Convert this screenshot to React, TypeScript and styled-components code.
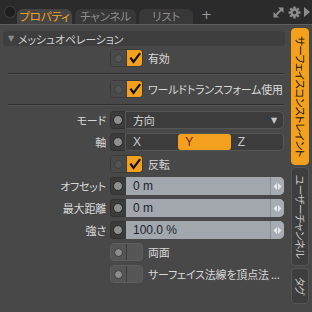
import React from 'react';
import styled, { createGlobalStyle } from 'styled-components';

const Global = createGlobalStyle`
  html, body { margin: 0; padding: 0; background: #484848; }
  body { font-family: "Noto Sans CJK JP", "Noto Sans", sans-serif; }
`;

const Frame = styled.div`
  width: 312px;
  height: 312px;
  display: flex;
  flex-direction: column;
  background: #484848;
  overflow: hidden;
  font-family: "Noto Sans CJK JP", "Noto Sans", sans-serif;
  font-feature-settings: "palt";
  color: #d8d8d8;
  font-size: 11px;
  letter-spacing: -0.2px;
`;

const TopBar = styled.div`
  height: 25px;
  flex: none;
  box-sizing: border-box;
  background: #2b2b2b;
  border-bottom: 1px solid #5e5e5e;
  display: flex;
  align-items: flex-end;
  padding-left: 5px;
`;

const Knob = styled.div`
  width: 10px;
  height: 10px;
  border-radius: 50%;
  background: #1e1e1e;
  box-shadow: 0 0 0 1px #3a3a3a;
  align-self: center;
  margin-right: 2px;
`;

const Tab = styled.div<{ $active?: boolean; $w: number }>`
  width: ${(p) => p.$w}px;
  height: 15px;
  margin-right: 3px;
  border-radius: 6px 6px 0 0;
  background: ${(p) => (p.$active ? '#454545' : '#383838')};
  color: ${(p) => (p.$active ? '#f3a21f' : '#8e8e8e')};
  font-size: 11.5px;
  line-height: 15px;
  text-align: center;
  white-space: nowrap;
`;

const Plus = styled.div`
  color: #9a9a9a;
  font-family: "DejaVu Sans", sans-serif;
  font-size: 13px;
  line-height: 15px;
  margin-left: 5px;
  height: 17px;
`;

const TopIcons = styled.div`
  margin-left: auto;
  margin-right: 2px;
  display: flex;
  align-items: center;
  gap: 3px;
  align-self: center;
`;

const Body = styled.div`
  flex: 1;
  display: flex;
  min-height: 0;
`;

const Main = styled.div`
  flex: 1;
  display: flex;
  flex-direction: column;
  padding: 6px 5px 0 3px;
`;

const Header = styled.div`
  height: 15px;
  border-radius: 4px;
  background: #3e3e3e;
  display: flex;
  align-items: center;
  padding-left: 5px;
  margin-right: -1px;
  color: #d0d0d0;
`;

const Caret = styled.span`
  font-family: "DejaVu Sans", sans-serif;
  font-size: 8px;
  color: #8a8a8a;
  margin-right: 4px;
`;

const Rows = styled.div`
  display: flex;
  flex-direction: column;
  gap: 4px;
  margin-top: 3px;
`;

const Row = styled.div`
  height: 18px;
  display: flex;
  align-items: center;
`;

const Label = styled.div`
  width: 103px;
  margin-right: 4px;
  text-align: right;
  white-space: nowrap;
`;

const Sep = styled.div`
  height: 5px;
  margin-left: 5px;
  display: flex;
  align-items: center;
  &::before {
    content: '';
    flex: 1;
    height: 1px;
    background: #2f2f2f;
    border-bottom: 1px solid #555;
  }
`;

const ToggleBox = styled.div<{ $on?: boolean }>`
  width: 33px;
  height: 18px;
  box-sizing: border-box;
  border-radius: 4px;
  border: 1px solid ${(p) => (p.$on ? '#3a3a3a' : '#5e5e5e')};
  background: #555;
  display: flex;
  overflow: hidden;
  flex: none;
`;

const ToggleDot = styled.div<{ $on?: boolean }>`
  width: 15px;
  display: flex;
  align-items: center;
  justify-content: center;
  background: ${(p) => (p.$on ? '#4a4a4a' : '#555')};
  border-right: 1px solid #3c3c3c;
  &::after {
    content: '';
    width: 9px;
    height: 9px;
    border-radius: 50%;
    box-sizing: border-box;
    background: ${(p) => (p.$on ? '#555' : '#8d8d8d')};
    border: 1px solid ${(p) => (p.$on ? '#3e3e3e' : '#3a3a3a')};
  }
`;

const ToggleRight = styled.div<{ $on?: boolean }>`
  flex: 1;
  background: ${(p) => (p.$on ? '#f2a01e' : '#565656')};
  display: flex;
  align-items: center;
  justify-content: center;
`;

const ToggleText = styled.div`
  margin-left: 5px;
  white-space: nowrap;
`;

const DotBox = styled.div`
  width: 15px;
  height: 18px;
  box-sizing: border-box;
  flex: none;
  background: #3c3c3c;
  border-radius: 4px 0 0 4px;
  border: 1px solid #333;
  border-right: none;
  display: flex;
  align-items: center;
  justify-content: center;
  &::after {
    content: '';
    width: 10px;
    height: 10px;
    border-radius: 50%;
    box-sizing: border-box;
    background: #8e8e8e;
    border: 1px solid #2a2a2a;
  }
`;

const Dropdown = styled.div`
  flex: 1;
  height: 18px;
  box-sizing: border-box;
  background: #3c3c3c;
  border: 1px solid #555;
  border-radius: 0 5px 5px 0;
  display: flex;
  align-items: center;
  padding: 0 6px 0 7px;
  color: #d8d8d8;
`;

const DropArrow = styled.span`
  margin-left: auto;
  font-family: "DejaVu Sans", sans-serif;
  font-size: 8px;
  color: #c8c8c8;
`;

const Segmented = styled.div`
  flex: 1;
  height: 18px;
  box-sizing: border-box;
  background: #3c3c3c;
  border: 1px solid #555;
  border-radius: 0 5px 5px 0;
  display: grid;
  grid-template-columns: 1fr 1fr 1fr;
  overflow: hidden;
`;

const Seg = styled.div<{ $on?: boolean }>`
  display: flex;
  align-items: center;
  padding-left: 7px;
  font-family: "Liberation Sans", sans-serif;
  font-size: 12px;
  letter-spacing: 0;
  background: ${(p) => (p.$on ? '#f2a01e' : 'transparent')};
  color: ${(p) => (p.$on ? '#7a1a05' : '#c8c8c8')};
  border-radius: ${(p) => (p.$on ? '3px' : '0')};
`;

const Field = styled.div`
  flex: 1;
  height: 18px;
  box-sizing: border-box;
  background: #a2a7ad;
  border-radius: 0 5px 5px 0;
  border-left: 1px solid #3a3a3a;
  display: flex;
  align-items: center;
  overflow: hidden;
`;

const FieldValue = styled.div`
  flex: 1;
  padding-left: 7px;
  font-family: "Liberation Sans", "DejaVu Sans", sans-serif;
  font-size: 12px;
  letter-spacing: 0;
  color: #1a1f30;
`;

const FieldSpin = styled.div`
  width: 13px;
  height: 100%;
  border-left: 1px solid #8a8f96;
  background: #a7acb2;
  display: flex;
  align-items: center;
  justify-content: center;
`;

const SideTabs = styled.div`
  width: 23px;
  flex: none;
  box-sizing: border-box;
  padding: 3px 3px 0 2px;
  display: flex;
  flex-direction: column;
  gap: 2px;
`;

const SideTab = styled.div<{ $active?: boolean; $h: number }>`
  height: ${(p) => p.$h}px;
  flex: none;
  border-radius: 4px;
  background: ${(p) => (p.$active ? '#f3a11c' : '#3e3e3e')};
  border: 1px solid ${(p) => (p.$active ? '#f3a11c' : '#555')};
  box-sizing: border-box;
  color: ${(p) => (p.$active ? '#111' : '#c8c8c8')};
  display: flex;
  align-items: center;
  justify-content: center;
`;

const SideText = styled.span`
  writing-mode: vertical-rl;
  text-orientation: sideways;
  font-size: 10.5px;
  letter-spacing: -0.5px;
  white-space: nowrap;
  line-height: 1;
`;

const Check = () => (
  <svg width="12" height="12" viewBox="0 0 12 12">
    <path d="M2 6.5 L4.5 10 L10.5 2" stroke="#111" strokeWidth="2.2" fill="none" strokeLinecap="square" />
  </svg>
);

const Spin = () => (
  <svg width="9" height="9" viewBox="0 0 9 9">
    <polygon points="4,1 4,8 0.5,4.5" fill="#e6e8ea" />
    <polygon points="5,1 5,8 8.5,4.5" fill="#e6e8ea" />
  </svg>
);

const Toggle = ({ on, text }: { on?: boolean; text: string }) => (
  <>
    <ToggleBox $on={on}>
      <ToggleDot $on={on} />
      <ToggleRight $on={on}>{on && <Check />}</ToggleRight>
    </ToggleBox>
    <ToggleText>{text}</ToggleText>
  </>
);

const ExpandIcon = () => (
  <svg width="13" height="13" viewBox="0 0 13 13">
    <path d="M3 10 L10 3" stroke="#8c8c8c" strokeWidth="2" />
    <polygon points="6,1.5 11.5,1.5 11.5,7" fill="#8c8c8c" />
    <polygon points="1.5,6 1.5,11.5 7,11.5" fill="#8c8c8c" />
  </svg>
);

const GearIcon = () => (
  <svg width="13" height="13" viewBox="0 0 13 13">
    <g fill="#8c8c8c">
      {Array.from({ length: 8 }).map((_, i) => (
        <rect key={i} x="5.3" y="0.5" width="2.4" height="3" transform={`rotate(${i * 45} 6.5 6.5)`} />
      ))}
      <circle cx="6.5" cy="6.5" r="4.2" />
    </g>
    <circle cx="6.5" cy="6.5" r="1.7" fill="#2b2b2b" />
  </svg>
);

const PlayIcon = () => (
  <svg width="6" height="10" viewBox="0 0 6 10">
    <polygon points="0,0 6,5 0,10" fill="#8c8c8c" />
  </svg>
);

export default function App() {
  return (
    <Frame>
      <Global />
      <TopBar>
        <Knob />
        <Tab $active $w={55}>プロパティ</Tab>
        <Tab $w={61}>チャンネル</Tab>
        <Tab $w={54}>リスト</Tab>
        <Plus>+</Plus>
        <TopIcons>
          <ExpandIcon />
          <GearIcon />
          <PlayIcon />
        </TopIcons>
      </TopBar>
      <Body>
        <Main>
          <Header>
            <Caret>▼</Caret>
            メッシュオペレーション
          </Header>
          <Rows>
            <Row>
              <Label />
              <Toggle on text="有効" />
            </Row>
            <Sep />
            <Row>
              <Label />
              <Toggle on text="ワールドトランスフォーム使用" />
            </Row>
            <Sep />
            <Row>
              <Label>モード</Label>
              <DotBox />
              <Dropdown>
                方向
                <DropArrow>▼</DropArrow>
              </Dropdown>
            </Row>
            <Row>
              <Label>軸</Label>
              <DotBox />
              <Segmented>
                <Seg>X</Seg>
                <Seg $on>Y</Seg>
                <Seg>Z</Seg>
              </Segmented>
            </Row>
            <Row>
              <Label />
              <Toggle on text="反転" />
            </Row>
            <Row>
              <Label>オフセット</Label>
              <DotBox />
              <Field>
                <FieldValue>0 m</FieldValue>
                <FieldSpin><Spin /></FieldSpin>
              </Field>
            </Row>
            <Row>
              <Label>最大距離</Label>
              <DotBox />
              <Field>
                <FieldValue>0 m</FieldValue>
                <FieldSpin><Spin /></FieldSpin>
              </Field>
            </Row>
            <Row>
              <Label>強さ</Label>
              <DotBox />
              <Field>
                <FieldValue>100.0 %</FieldValue>
                <FieldSpin><Spin /></FieldSpin>
              </Field>
            </Row>
            <Row>
              <Label />
              <Toggle text="両面" />
            </Row>
            <Row>
              <Label />
              <Toggle text="サーフェイス法線を頂点法 ..." />
            </Row>
          </Rows>
        </Main>
        <SideTabs>
          <SideTab $active $h={137}>
            <SideText>サーフェイスコンストレイント</SideText>
          </SideTab>
          <SideTab $h={99}>
            <SideText>ユーザーチャンネル</SideText>
          </SideTab>
          <SideTab $h={36}>
            <SideText>タグ</SideText>
          </SideTab>
        </SideTabs>
      </Body>
    </Frame>
  );
}
